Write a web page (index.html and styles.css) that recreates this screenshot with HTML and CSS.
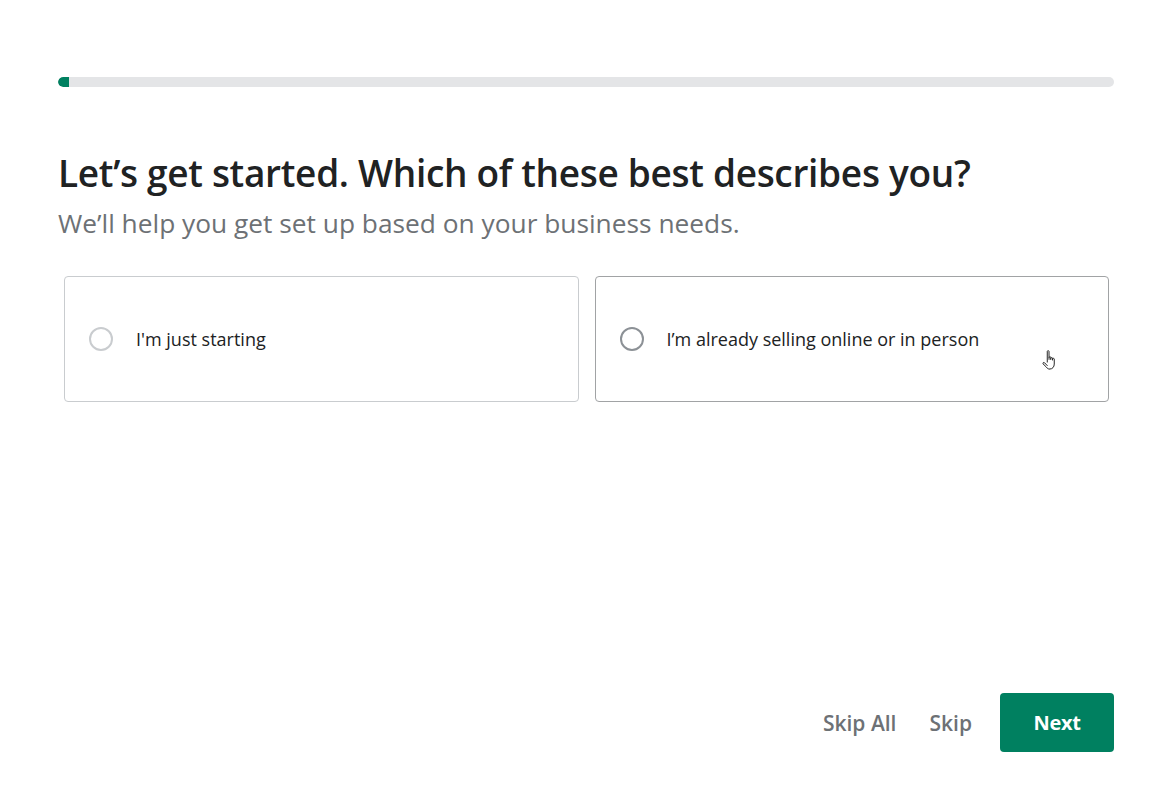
FILE: index.html
```html
<!DOCTYPE html>
<html lang="en">
<head>
<meta charset="utf-8">
<title>Let's get started</title>
<link rel="stylesheet" href="styles.css">
</head>
<body>
<div class="page">
  <div class="progress"><div class="progress-fill"></div></div>
  <h1 class="title">Let’s get started. Which of these best describes you?</h1>
  <p class="subtitle">We’ll help you get set up based on your business needs.</p>
  <div class="options">
    <label class="option">
      <span class="radio"></span>
      <span class="option-text">I'm just starting</span>
    </label>
    <label class="option option-hover">
      <span class="radio radio-hover"></span>
      <span class="option-text">I’m already selling online or in person</span>
      <svg class="cursor" width="20" height="24" viewBox="0 0 18 22" aria-hidden="true">
        <path d="M6.5 12V2.2c0-.9 1.6-.9 1.6 0V9.5m0-1.8c0-.9 1.6-.9 1.6 0v2m0-1.2c0-.9 1.6-.9 1.6 0v1.6m0-.9c0-.9 1.6-.9 1.6 0v4.6c0 2.6-1.6 4.6-4.3 4.6H8.7c-1.5 0-2.4-.8-3.2-2L2.6 13.6c-.5-.9.6-1.7 1.4-1l2.5 2.6" fill="#fff" stroke="#222" stroke-width="0.9" stroke-linejoin="round" stroke-linecap="round"/>
      </svg>
    </label>
  </div>
  <div class="footer">
    <button class="link-btn skip-all">Skip All</button>
    <button class="link-btn skip">Skip</button>
    <button class="primary-btn">Next</button>
  </div>
</div>
</body>
</html>
```
FILE: styles.css
```css
html, body {
  margin: 0;
  padding: 0;
  background: #ffffff;
}
body {
  font-family: "Open Sans", "Noto Sans", "Liberation Sans", sans-serif;
  color: #202223;
}
.page {
  box-sizing: border-box;
  height: 808px;
  padding: 77px 60px 56px 58px;
  display: flex;
  flex-direction: column;
}
.progress {
  height: 10px;
  background: #e4e5e7;
  border-radius: 5px;
  overflow: hidden;
}
.progress-fill {
  width: 11px;
  height: 100%;
  background: #008060;
  border-radius: 5px 0 0 5px;
}
.title {
  margin: 63px 0 0;
  font-size: 37px;
  font-weight: 600;
  line-height: 46px;
  letter-spacing: -0.3px;
  color: #202223;
}
.subtitle {
  margin: 10px 0 0;
  font-size: 26.3px;
  line-height: 34px;
  color: #6d7175;
}
.options {
  margin: 36px 5px 0 6px;
  display: grid;
  grid-template-columns: 1fr 1fr;
  gap: 16px;
}
.option {
  position: relative;
  box-sizing: border-box;
  height: 126px;
  border: 1px solid #c9cccf;
  border-radius: 4px;
  display: flex;
  align-items: center;
  padding-left: 24px;
  gap: 23px;
  cursor: pointer;
}
.option-hover {
  border-color: #a1a3a5;
}
.radio {
  box-sizing: border-box;
  width: 24px;
  height: 24px;
  border-radius: 50%;
  border: 2px solid #c9cccf;
  flex-shrink: 0;
}
.radio-hover {
  border-color: #8c9196;
}
.option-text {
  font-size: 18px;
  color: #202223;
}
.cursor {
  position: absolute;
  left: 444px;
  top: 72px;
}
.footer {
  margin-top: auto;
  display: flex;
  justify-content: flex-end;
  align-items: center;
}
.link-btn {
  background: none;
  border: none;
  padding: 0;
  font-family: inherit;
  font-size: 21px;
  font-weight: 600;
  color: #6d7175;
  cursor: pointer;
}
.skip-all {
  margin-right: 33px;
}
.skip {
  margin-right: 28px;
}
.primary-btn {
  width: 114px;
  height: 59px;
  background: #008060;
  color: #ffffff;
  border: none;
  border-radius: 4px;
  font-family: inherit;
  font-size: 20px;
  font-weight: 700;
  letter-spacing: -0.3px;
  cursor: pointer;
}
```
